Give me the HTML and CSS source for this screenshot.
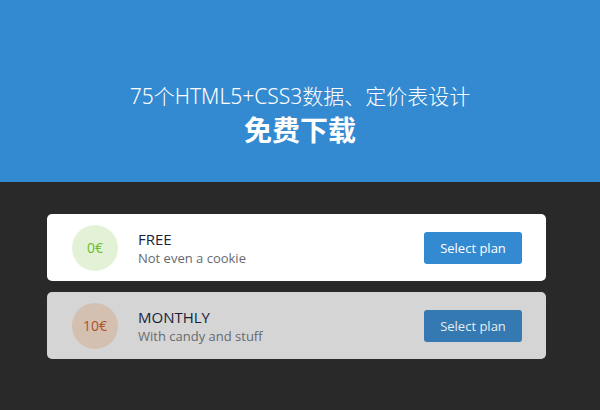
FILE: index.html
```html
<!DOCTYPE html>
<html>
<head>
<meta charset="utf-8">
<link rel="stylesheet" href="styles.css">
</head>
<body>
<header class="hero">
  <div class="hero-line">75个HTML5+CSS3数据、定价表设计</div>
  <div class="hero-title">免费下载</div>
</header>
<main class="plans">
  <div class="plan plan-free">
    <div class="price">0€</div>
    <div class="info">
      <div class="name">FREE</div>
      <div class="desc">Not even a cookie</div>
    </div>
    <button class="select">Select plan</button>
  </div>
  <div class="plan plan-monthly">
    <div class="price">10€</div>
    <div class="info">
      <div class="name">MONTHLY</div>
      <div class="desc">With candy and stuff</div>
    </div>
    <button class="select">Select plan</button>
  </div>
</main>
</body>
</html>
```
FILE: styles.css
```css
html, body {
  margin: 0;
  padding: 0;
}
body {
  width: 600px;
  height: 410px;
  background: #292929;
  font-family: "Open Sans", "Noto Sans", "Noto Sans CJK SC", sans-serif;
  overflow: hidden;
}
.hero {
  height: 182px;
  background: #348ad0;
  color: #fff;
  display: flex;
  flex-direction: column;
  align-items: center;
  padding-top: 82px;
  box-sizing: border-box;
}
.hero-line {
  font-family: "Noto Sans", "Noto Sans CJK SC", sans-serif;
  font-size: 21px;
  line-height: 29px;
  font-weight: 300;
  letter-spacing: 0;
}
.hero-title {
  font-family: "Noto Sans CJK SC", sans-serif;
  font-size: 28px;
  line-height: 36px;
  font-weight: 700;
}
.plans {
  padding: 32px 54px 0 47px;
  display: flex;
  flex-direction: column;
  gap: 11px;
}
.plan {
  height: 67px;
  border-radius: 5px;
  display: flex;
  align-items: center;
  padding: 0 24px 0 25px;
}
.plan-free {
  background: #ffffff;
}
.plan-monthly {
  background: #d5d5d5;
}
.price {
  width: 46px;
  height: 46px;
  border-radius: 50%;
  display: flex;
  align-items: center;
  justify-content: center;
  font-size: 14px;
  flex-shrink: 0;
}
.plan-free .price {
  background: #e3f2d7;
  color: #6bbd2c;
}
.plan-monthly .price {
  background: #d3c0b0;
  color: #b0502a;
}
.info {
  margin-left: 20px;
  flex: 1;
}
.name {
  font-size: 15px;
  line-height: 20px;
  color: #18223a;
}
.desc {
  font-size: 13px;
  line-height: 18px;
  color: #666a70;
}
.select {
  width: 98px;
  height: 32px;
  border: none;
  border-radius: 3px;
  background: #348ad0;
  color: #fff;
  font-family: "Open Sans", "Noto Sans", sans-serif;
  font-size: 13px;
  padding: 0;
}
.plan-monthly .select {
  background: #3479b2;
  color: #e6edf3;
}
```
